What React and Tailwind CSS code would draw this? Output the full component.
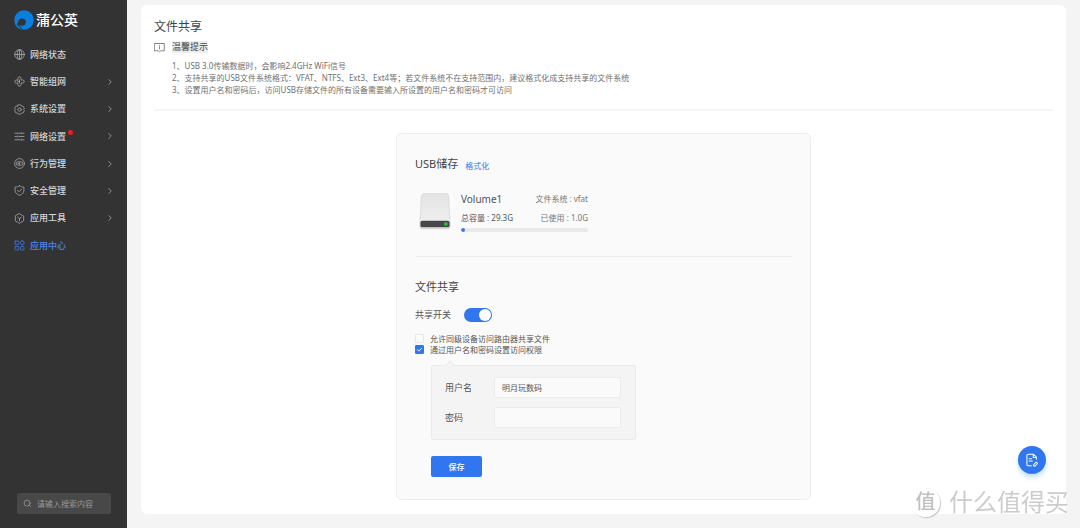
import React, { useState } from 'react';
import { ChevronRight, Search } from 'lucide-react';

const Icon = ({ children, className = 'w-[11px] h-[11px]' }) => (
  <svg viewBox="0 0 22 22" fill="none" stroke="currentColor" strokeWidth="1.6" strokeLinejoin="round" strokeLinecap="round" className={`${className} shrink-0`} aria-hidden="true">
    {children}
  </svg>
);

const menu = [
  {
    label: '网络状态',
    icon: (
      <>
        <circle cx="11" cy="11" r="9.6" />
        <ellipse cx="11" cy="11" rx="4.4" ry="9.6" />
        <path d="M1.4 11h19.2M11 1.4v19.2" />
      </>
    ),
  },
  {
    label: '智能组网',
    arrow: true,
    icon: (
      <>
        <path d="M8 8V4.500a3 3 0 0 1 6 0V8h3.500a3 3 0 0 1 0 6H14v3.500a3 3 0 0 1-6 0V14H4.500a3 3 0 0 1 0-6z" />
        <path d="M11 8v6M8 11h3" />
      </>
    ),
  },
  {
    label: '系统设置',
    arrow: true,
    icon: (
      <>
        <path d="M8.500 1.800h5l2 2.400 3.200.6 1.800 4-1 2.200 1 2.400-1.800 4-3.200.5-2 2.400h-5l-2-2.400-3.200-.5-1.800-4 1-2.400-1-2.200 1.800-4 3.200-.6z" />
        <circle cx="11" cy="11" r="3.400" />
      </>
    ),
  },
  {
    label: '网络设置',
    arrow: true,
    dot: true,
    icon: (
      <>
        <path d="M2 4.500h10M17 4.500h3M2 11h3M10 11h10M2 17.500h10M17 17.500h3" />
        <path d="M14.500 3v3M7.500 9.500v3M14.500 16v3" />
      </>
    ),
  },
  {
    label: '行为管理',
    arrow: true,
    icon: (
      <>
        <circle cx="11" cy="11" r="9.8" />
        <path d="M10 7.500H8a3.500 3.500 0 0 0 0 7h2M12 7.500h2a3.500 3.500 0 0 1 0 7h-2zM8 11h2" />
      </>
    ),
  },
  {
    label: '安全管理',
    arrow: true,
    icon: (
      <>
        <path d="M11 1.500c2.500 1.800 5.500 2.600 8.800 2.600v7c0 4.400-3.600 7.600-8.800 9.700-5.200-2.100-8.800-5.300-8.800-9.700v-7c3.300 0 6.300-.8 8.800-2.600z" />
        <path d="M7 10.500l3 3.200 5.200-5.400" />
      </>
    ),
  },
  {
    label: '应用工具',
    arrow: true,
    icon: (
      <>
        <path d="M11 1.400l8.300 4.800v9.600L11 20.600l-8.300-4.800V6.200z" />
        <path d="M7.500 8.500l3.500 2.500 3.500-2.500M11 11v4.500" />
      </>
    ),
  },
  {
    label: '应用中心',
    active: true,
    icon: (
      <>
        <rect x="2" y="2" width="7.500" height="7.500" rx="1.500" />
        <rect x="13" y="2" width="7" height="7.500" rx="3" />
        <rect x="2" y="13" width="7.500" height="7" rx="1.500" />
        <rect x="13" y="13" width="7" height="7" rx="1.500" />
      </>
    ),
  },
];

const Sidebar = () => (
  <aside className="w-[127px] shrink-0 bg-[#333333] flex flex-col pb-[14px]">
    <div className="flex items-center gap-[2px] pt-[10px] pl-[14px]">
      <svg viewBox="0 0 38 38" className="w-5 h-5" aria-hidden="true">
        <circle cx="19" cy="19" r="18.500" fill="#0b7fe0" />
        <circle cx="15.500" cy="23" r="7" fill="#333333" />
        <path d="M9 20L4 31l5 6 6-1-4-6z" fill="#333333" />
        <path d="M2 26c2 6 7 10.500 13 11.200-3-1.800-4.500-4-5-7-3-.4-6-1.700-8-4.200z" fill="#0b7fe0" />
      </svg>
      <span className="text-[14px] leading-5 font-medium text-white">蒲公英</span>
    </div>

    <nav className="mt-[11px] h-[218px] flex flex-col justify-between">
      {menu.map((item) => (
        <a
          key={item.label}
          href="#"
          className={`h-[27px] pl-[14px] pr-3 flex items-center text-[9px] font-medium ${item.active ? 'text-[#4a86f0]' : 'text-[#d4d4d4]'}`}
        >
          <span className={item.active ? 'text-[#3f7df0]' : 'text-[#a8a8a8]'}>
            <Icon>{item.icon}</Icon>
          </span>
          <span className="relative ml-[5px]">
            {item.label}
            {item.dot && <i className="absolute -right-[7px] top-0 w-[5px] h-[5px] rounded-full bg-[#ee1c25]"></i>}
          </span>
          {item.arrow && <ChevronRight className="ml-auto w-[10px] h-[10px] text-[#a0a0a0]" strokeWidth={2} />}
        </a>
      ))}
    </nav>

    <label className="mt-auto ml-[17px] mr-4 h-[21px] rounded-xs bg-[#484848] flex items-center gap-[5px] px-[6px]">
      <Search className="w-[9px] h-[9px] shrink-0 text-[#9a9a9a]" />
      <input type="text" aria-label="搜索" placeholder="请输入搜索内容" className="w-full min-w-0 bg-transparent text-[8px] outline-none placeholder:text-[#999999]" />
    </label>
  </aside>
);

const Drive = () => (
  <svg viewBox="0 0 96 112" className="w-8 h-[37px] shrink-0" aria-hidden="true">
    <defs>
      <linearGradient id="lid" x1="0" y1="0" x2="0" y2="1">
        <stop offset="0" stopColor="#e3e3e3" />
        <stop offset="1" stopColor="#f1f1f1" />
      </linearGradient>
    </defs>
    <rect x="1" y="82" width="94" height="28" rx="8" fill="#dcdcdc" />
    <path d="M14 2h68q7 0 7.500 7L93 84v16q0 6-6 6H9q-6 0-6-6V84L6.500 9Q7 2 14 2z" fill="url(#lid)" stroke="#d2d2d2" strokeWidth="2" />
    <rect x="4" y="84" width="88" height="20" rx="5" fill="#45474b" />
    <circle cx="81" cy="94" r="5.500" fill="#1fd23c" />
  </svg>
);

const Field = ({ id, label, type = 'text', defaultValue }) => (
  <div className="flex items-center">
    <label htmlFor={id} className="w-[49px] text-[9px] text-[#555555]">{label}</label>
    <input
      id={id}
      type={type}
      defaultValue={defaultValue}
      className="flex-1 min-w-0 h-[21px] px-[7px] rounded-xs border border-[#ececec] bg-[#fafafa] text-[8px] text-[#555555] outline-none"
    />
  </div>
);

const Check = ({ label, checked, onChange }) => (
  <label className="h-[11px] flex items-center gap-[6px] text-[8px] text-[#555555]">
    <span className="relative flex">
      <input
        type="checkbox"
        checked={checked}
        onChange={onChange}
        className="appearance-none w-[9px] h-[9px] rounded-[1px] border border-[#e6e6e6] bg-[#fcfcfc] checked:bg-[#3076ee] checked:border-[#3076ee]"
      />
      {checked && (
        <svg viewBox="0 0 9 9" className="absolute inset-0 pointer-events-none" fill="none" stroke="#ffffff" aria-hidden="true">
          <path d="M2.300 4.500l1.600 1.600 2.900-3" />
        </svg>
      )}
    </span>
    {label}
  </label>
);

const SharePanel = () => {
  const [shared, setShared] = useState(true);
  const [peer, setPeer] = useState(false);
  const [auth, setAuth] = useState(true);
  const used = 1.0;
  const total = 29.3;

  return (
    <section className="mx-auto mt-[22px] w-full max-w-[415px] rounded-md border border-[#eeeeee] bg-[#fafafa] px-[18px] pt-5 pb-[22px]">
      <div className="flex items-center h-5">
        <h2 className="text-[11px] text-[#444444]">USB储存</h2>
        <a href="#" className="ml-[7px] pt-1 text-[8px] text-[#3076ee]">格式化</a>
      </div>

      <div className="mt-4 ml-1 flex items-center gap-[10px]">
        <Drive />
        <div className="w-[127px]">
          <div className="h-[18px] flex items-center justify-between">
            <span className="text-[10px] text-[#555555]">Volume1</span>
            <span className="text-[8px] text-[#777777]">文件系统 : vfat</span>
          </div>
          <div className="h-5 flex items-center justify-between text-[8px]">
            <span className="text-[#555555]">总容量 : {total}G</span>
            <span className="text-[#777777]">已使用 : {used.toFixed(1)}G</span>
          </div>
          <div className="h-1 rounded-full bg-[#e9e9e9] overflow-hidden">
            <div className="h-full rounded-full bg-[#3076ee]" style={{ width: `${(used / total) * 100}%` }}></div>
          </div>
        </div>
      </div>

      <hr className="mt-6 border-[#eeeeee]" />

      <h2 className="mt-5 text-[11px] leading-5 text-[#444444]">文件共享</h2>
      <label className="mt-2 h-5 flex items-center gap-[13px] text-[9px] text-[#555555]">
        共享开关
        <span className="relative flex">
          <input
            type="checkbox"
            role="switch"
            checked={shared}
            onChange={() => setShared(!shared)}
            className="peer appearance-none w-7 h-[14px] rounded-full bg-[#cccccc] checked:bg-[#3076ee]"
          />
          <i className="absolute left-px top-px w-3 h-3 rounded-full bg-white peer-checked:left-auto peer-checked:right-px pointer-events-none"></i>
        </span>
      </label>

      <div className="mt-2">
        <Check label="允许同级设备访问路由器共享文件" checked={peer} onChange={() => setPeer(!peer)} />
        <Check label="通过用户名和密码设置访问权限" checked={auth} onChange={() => setAuth(!auth)} />
      </div>

      <form className="ml-4" onSubmit={(e) => e.preventDefault()}>
        <div className="relative mt-[10px] w-[205px] rounded-xs border border-[#ebebeb] bg-[#f4f4f4] pl-[13px] pr-[14px] py-[11px] flex flex-col gap-[9px]">
          <svg viewBox="0 0 10 7" className="absolute left-[13px] -top-[6px] w-[10px] h-[7px]" aria-hidden="true">
            <path d="M0 6L5 .8 10 6v1H0z" fill="#f4f4f4" />
            <path d="M0 6L5 .8 10 6" fill="none" stroke="#e6e6e6" />
          </svg>
          <Field id="username" label="用户名" defaultValue="明月玩数码" />
          <Field id="password" label="密码" type="password" />
        </div>
        <button type="submit" className="block mt-4 w-[51px] h-[21px] rounded-xs bg-[#3076ee] text-[8px] font-medium text-white">保存</button>
      </form>
    </section>
  );
};

export default function App() {
  return (
    <div className="min-h-screen flex bg-[#f4f4f4] font-['Noto_Sans','Noto_Sans_CJK_SC',sans-serif] text-[#444444]">
      <Sidebar />

      <main className="flex-1 min-w-0 pt-[5px] px-[14px] pb-[14px] flex">
        <div className="flex-1 rounded-md bg-white px-[13px] pt-3 pb-[14px]">
          <h1 className="text-[12px] leading-5">文件共享</h1>
          <div className="h-5 flex items-center gap-[7px]">
            <Icon className="w-[11px] h-[11px] text-[#666666]">
              <path d="M1.500 3h19v14.500h-7L11 19.500l-2.500-2H1.500z" />
              <path d="M11 9.500v4.500M11 6.500v.2" />
            </Icon>
            <span className="text-[9px] leading-3 bg-[#eeeeee]">温馨提示</span>
          </div>
          <ul className="mt-[3px] ml-[18px] text-[8px] leading-3 text-[#707070]">
            <li>1、USB 3.0传输数据时，会影响2.4GHz WiFi信号</li>
            <li>2、支持共享的USB文件系统格式：VFAT、NTFS、Ext3、Ext4等；若文件系统不在支持范围内，建议格式化成支持共享的文件系统</li>
            <li>3、设置用户名和密码后，访问USB存储文件的所有设备需要输入所设置的用户名和密码才可访问</li>
          </ul>
          <hr className="mt-[13px] border-t-2 border-[#f6f6f6]" />
          <SharePanel />
        </div>
      </main>

      <button type="button" aria-label="反馈" className="fixed right-[34px] bottom-[54px] w-7 h-7 rounded-full bg-[#3076ee] text-white shadow-md shadow-blue-200 flex items-center justify-center">
        <Icon className="w-[14px] h-[14px]">
          <path d="M10 20H5a2 2 0 0 1-2-2V4a2 2 0 0 1 2-2h8.500L18 6.500V10M13 2.500V7h4.500M6.500 9h4M6.500 12.500h5" />
          <path d="M13.500 18.500l4-4.200 2.200 2.200-4 4h-2.200z" />
        </Icon>
      </button>

      {/* filigrane */}
      <div className="fixed right-[11px] bottom-[10px] h-8 flex items-center gap-[9px] text-[#cccccc] pointer-events-none [text-shadow:1px_1px_0_#ffffff]">
        <span className="w-[29px] h-[29px] rounded-full bg-white/80 shadow-[1px_1px_1px_#c4c4c4] flex items-center justify-center text-[20px] font-medium text-[#c0c0c0]">值</span>
        <span className="text-[24px] leading-8">什么值得买</span>
      </div>
    </div>
  );
}
